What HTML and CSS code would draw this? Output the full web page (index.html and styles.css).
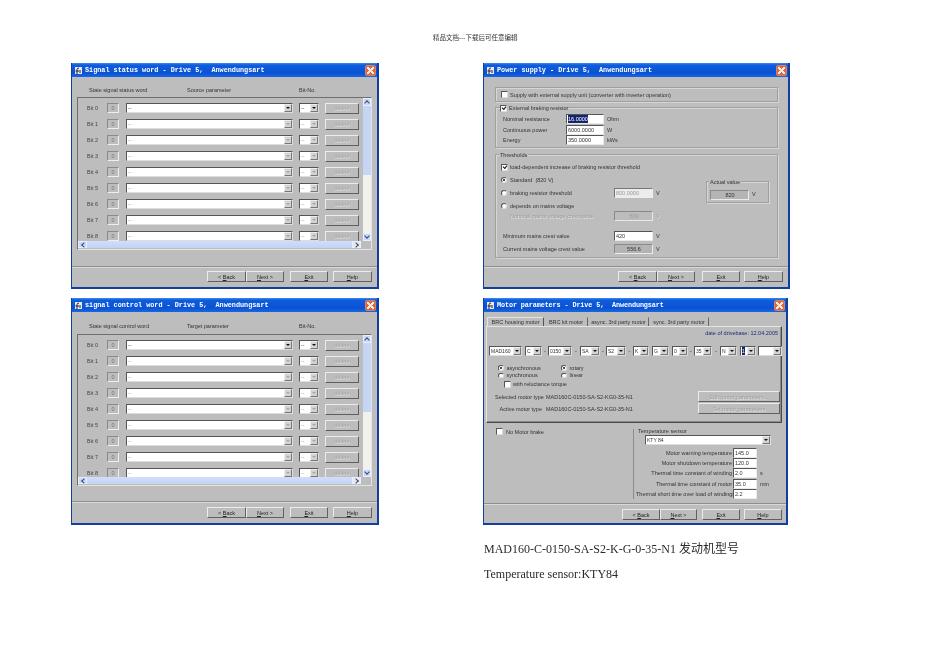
FILE: index.html
```html
<!DOCTYPE html>
<html lang="zh">
<head>
<meta charset="utf-8">
<title>Drive 5 dialogs</title>
<link rel="stylesheet" href="styles.css">
</head>
<body>
<header class="doc-head">精品文档---下载后可任意编辑</header>
<main class="sheet">

<section class="win">
  <div class="title"><svg class="ico" viewBox="0 0 9 9"><rect x="1" y="1" width="7" height="7" fill="#e8e8f0"/><path d="M3 8V3.5Q3 2 5 2M1.5 5H5M6 4v3" stroke="#223" fill="none"/></svg><span class="ttext">Signal status word - Drive 5,  Anwendungsart</span><span class="close"></span></div>
  <div class="heads"><span class="h1">State signal status word</span><span class="h2">Source parameter</span><span>Bit-No.</span></div>
  <div class="panel">
    <div class="view">
      <div class="bit on"><span class="bl">Bit 0</span><span class="num">0</span><span class="combo wide">--<i class="arr"></i></span><span class="combo small">--<i class="arr"></i></span><span class="btn del">delete</span></div>
      <div class="bit"><span class="bl">Bit 1</span><span class="num">0</span><span class="combo wide">--<i class="arr"></i></span><span class="combo small">--<i class="arr"></i></span><span class="btn del">delete</span></div>
      <div class="bit"><span class="bl">Bit 2</span><span class="num">0</span><span class="combo wide">--<i class="arr"></i></span><span class="combo small">--<i class="arr"></i></span><span class="btn del">delete</span></div>
      <div class="bit"><span class="bl">Bit 3</span><span class="num">0</span><span class="combo wide">--<i class="arr"></i></span><span class="combo small">--<i class="arr"></i></span><span class="btn del">delete</span></div>
      <div class="bit"><span class="bl">Bit 4</span><span class="num">0</span><span class="combo wide">--<i class="arr"></i></span><span class="combo small">--<i class="arr"></i></span><span class="btn del">delete</span></div>
      <div class="bit"><span class="bl">Bit 5</span><span class="num">0</span><span class="combo wide">--<i class="arr"></i></span><span class="combo small">--<i class="arr"></i></span><span class="btn del">delete</span></div>
      <div class="bit"><span class="bl">Bit 6</span><span class="num">0</span><span class="combo wide">--<i class="arr"></i></span><span class="combo small">--<i class="arr"></i></span><span class="btn del">delete</span></div>
      <div class="bit"><span class="bl">Bit 7</span><span class="num">0</span><span class="combo wide">--<i class="arr"></i></span><span class="combo small">--<i class="arr"></i></span><span class="btn del">delete</span></div>
      <div class="bit"><span class="bl">Bit 8</span><span class="num">0</span><span class="combo wide">--<i class="arr"></i></span><span class="combo small">--<i class="arr"></i></span><span class="btn del">delete</span></div>
    </div>
    <div class="vbar"><span class="sb up"></span><span class="thumb"></span><span class="track"></span><span class="sb down"></span></div>
    <div class="hbar"><span class="sb left"></span><span class="hthumb"></span><span class="sb right"></span></div>
  </div>
  <div class="foot"><span class="btn nav b39"><span>&lt; <u>B</u>ack</span></span><span class="btn nav"><span><u>N</u>ext &gt;</span></span><span class="btn nav gapl"><span><u>E</u>xit</span></span><span class="btn nav b39 gapm"><span><u>H</u>elp</span></span></div>
</section>

<section class="win">
  <div class="title"><svg class="ico" viewBox="0 0 9 9"><rect x="1" y="1" width="7" height="7" fill="#e8e8f0"/><path d="M3 8V3.5Q3 2 5 2M1.5 5H5M6 4v3" stroke="#223" fill="none"/></svg><span class="ttext">Power supply - Drive 5,  Anwendungsart</span><span class="close"></span></div>
  <div class="power">
    <div class="group g-ext"><span class="chk"></span><span>Supply with external supply unit (converter with inverter operation)</span></div>
    <div class="group g-res">
      <div class="legend"><span class="chk on"></span><span>External braking resistor</span></div>
      <div class="prow"><span class="plabel">Nominal resistance</span><span class="edit e38"><b class="sel">16.0000</b></span><span class="unit">Ohm</span></div>
      <div class="prow"><span class="plabel">Continuous power</span><span class="edit e38">6000.0000</span><span class="unit">W</span></div>
      <div class="prow"><span class="plabel">Energy</span><span class="edit e38">350.0000</span><span class="unit">kWs</span></div>
    </div>
    <div class="group g-thr">
      <div class="legend plain">Thresholds</div>
      <div class="thr">
        <div class="thr-left">
          <div class="trow first"><span class="chk on"></span><span class="ctext">load-dependent increase of braking resistor threshold</span></div>
          <div class="trow"><span class="radio on"></span><span class="rtext">Standard&nbsp; (820 V)</span></div>
          <div class="trow"><span class="radio"></span><span class="rtext rt-w">braking resistor threshold</span><span class="edit e39 off-white">800.0000</span><span class="unit">V</span></div>
          <div class="trow"><span class="radio"></span><span class="rtext">depends on mains voltage</span></div>
          <div class="trow tight"><span class="dis rt-n">Nominal mains voltage crest value</span><span class="edit e39 dis-c">509</span><span class="unit dis">V</span></div>
          <div class="trow far"><span class="tl">Minimum mains crest value</span><span class="edit e39">420</span><span class="unit">V</span></div>
          <div class="trow"><span class="tl">Current mains voltage crest value</span><span class="edit e39 ro ctr">556.6</span><span class="unit">V</span></div>
        </div>
        <div class="actual">
          <div class="legend plain">Actual value</div>
          <div class="arow"><span class="edit e39 ro ctr">820</span><span class="unit uv">V</span></div>
        </div>
      </div>
    </div>
  </div>
  <div class="foot power-foot"><span class="btn nav b39"><span>&lt; <u>B</u>ack</span></span><span class="btn nav"><span><u>N</u>ext &gt;</span></span><span class="btn nav gapl"><span><u>E</u>xit</span></span><span class="btn nav b39 gapm"><span><u>H</u>elp</span></span></div>
</section>

<section class="win lower">
  <div class="title"><svg class="ico" viewBox="0 0 9 9"><rect x="1" y="1" width="7" height="7" fill="#e8e8f0"/><path d="M3 8V3.5Q3 2 5 2M1.5 5H5M6 4v3" stroke="#223" fill="none"/></svg><span class="ttext">signal control word - Drive 5,  Anwendungsart</span><span class="close"></span></div>
  <div class="heads"><span class="h1">State signal control word</span><span class="h2">Target parameter</span><span>Bit-No.</span></div>
  <div class="panel">
    <div class="view">
      <div class="bit on"><span class="bl">Bit 0</span><span class="num">0</span><span class="combo wide">--<i class="arr"></i></span><span class="combo small">--<i class="arr"></i></span><span class="btn del">delete</span></div>
      <div class="bit"><span class="bl">Bit 1</span><span class="num">0</span><span class="combo wide">--<i class="arr"></i></span><span class="combo small">--<i class="arr"></i></span><span class="btn del">delete</span></div>
      <div class="bit"><span class="bl">Bit 2</span><span class="num">0</span><span class="combo wide">--<i class="arr"></i></span><span class="combo small">--<i class="arr"></i></span><span class="btn del">delete</span></div>
      <div class="bit"><span class="bl">Bit 3</span><span class="num">0</span><span class="combo wide">--<i class="arr"></i></span><span class="combo small">--<i class="arr"></i></span><span class="btn del">delete</span></div>
      <div class="bit"><span class="bl">Bit 4</span><span class="num">0</span><span class="combo wide">--<i class="arr"></i></span><span class="combo small">--<i class="arr"></i></span><span class="btn del">delete</span></div>
      <div class="bit"><span class="bl">Bit 5</span><span class="num">0</span><span class="combo wide">--<i class="arr"></i></span><span class="combo small">--<i class="arr"></i></span><span class="btn del">delete</span></div>
      <div class="bit"><span class="bl">Bit 6</span><span class="num">0</span><span class="combo wide">--<i class="arr"></i></span><span class="combo small">--<i class="arr"></i></span><span class="btn del">delete</span></div>
      <div class="bit"><span class="bl">Bit 7</span><span class="num">0</span><span class="combo wide">--<i class="arr"></i></span><span class="combo small">--<i class="arr"></i></span><span class="btn del">delete</span></div>
      <div class="bit"><span class="bl">Bit 8</span><span class="num">0</span><span class="combo wide">--<i class="arr"></i></span><span class="combo small">--<i class="arr"></i></span><span class="btn del">delete</span></div>
    </div>
    <div class="vbar"><span class="sb up"></span><span class="thumb"></span><span class="track"></span><span class="sb down"></span></div>
    <div class="hbar"><span class="sb left"></span><span class="hthumb"></span><span class="sb right"></span></div>
  </div>
  <div class="foot"><span class="btn nav b39"><span>&lt; <u>B</u>ack</span></span><span class="btn nav"><span><u>N</u>ext &gt;</span></span><span class="btn nav gapl"><span><u>E</u>xit</span></span><span class="btn nav b39 gapm"><span><u>H</u>elp</span></span></div>
</section>

<section class="win lower motor">
  <div class="title"><svg class="ico" viewBox="0 0 9 9"><rect x="1" y="1" width="7" height="7" fill="#e8e8f0"/><path d="M3 8V3.5Q3 2 5 2M1.5 5H5M6 4v3" stroke="#223" fill="none"/></svg><span class="ttext">Motor parameters - Drive 5,  Anwendungsart</span><span class="close"></span></div>
  <div class="tabs"><span class="tab t1 act">BRC housing motor</span><span class="tab t2">BRC kit motor</span><span class="tab t3">async. 3rd party motor</span><span class="tab t4">sync. 3rd party motor</span></div>
  <div class="tabpanel">
    <div class="date">date of drivebase: 12.04.2005</div>
    <div class="typecode">
      <span class="combo c33">MAD160<i class="arr"></i></span><span class="combo c17 m3">C<i class="arr"></i></span><span class="dash d6">-</span><span class="combo c24">0150<i class="arr"></i></span><span class="dash d8">-</span><span class="combo c20">SA<i class="arr"></i></span><span class="dash d6">-</span><span class="combo c20">S2<i class="arr"></i></span><span class="dash d7">-</span><span class="combo c16">K<i class="arr"></i></span><span class="combo c17 m3">G<i class="arr"></i></span><span class="combo c16 m3">0<i class="arr"></i></span><span class="dash d6">-</span><span class="combo c18">35<i class="arr"></i></span><span class="dash d8">-</span><span class="combo c17">N<i class="arr"></i></span><span class="combo c16 m3"><b class="sel">1</b><i class="arr"></i></span><span class="combo c24 m2"><i class="arr"></i></span>
    </div>
    <div class="rrow"><span class="rcell"><span class="radio on"></span><span class="rtext">asynchronous</span></span><span class="rcell"><span class="radio on"></span><span class="rtext">rotary</span></span></div>
    <div class="rrow"><span class="rcell"><span class="radio"></span><span class="rtext">synchronous</span></span><span class="rcell"><span class="radio"></span><span class="rtext">linear</span></span></div>
    <div class="relu"><span class="chk"></span><span>with reluctance torque</span></div>
    <div class="mtype first"><span class="mlabel">Selected motor type</span><span class="mval">MAD160C-0150-SA-S2-KG0-35-N1</span><span class="btn wide-btn">Edit motor parameters...</span></div>
    <div class="mtype"><span class="mlabel">Active motor type</span><span class="mval">MAD160C-0150-SA-S2-KG0-35-N1</span><span class="btn wide-btn">Set motor parameters</span></div>
  </div>
  <div class="lowerpart">
    <div class="brake"><span class="chk"></span><span>No Motor brake</span></div>
    <div class="sensor">
      <div class="slabel">Temperature sensor</div>
      <span class="combo kty">KTY 84<i class="arr"></i></span>
      <div class="srow firsts"><span class="sl">Motor warning temperature</span><span class="edit e24">145.0</span></div>
      <div class="srow"><span class="sl">Motor shutdown temperature</span><span class="edit e24">120.0</span></div>
      <div class="srow"><span class="sl">Thermal time constant of winding</span><span class="edit e24">2.0</span><span class="unit">s</span></div>
      <div class="srow"><span class="sl">Thermal time constant of motor</span><span class="edit e24">35.0</span><span class="unit">min</span></div>
      <div class="srow"><span class="sl">Thermal short time over load of windings</span><span class="edit e24">2.2</span></div>
    </div>
  </div>
  <div class="foot motor-foot"><span class="btn nav"><span>&lt; <u>B</u>ack</span></span><span class="btn nav n37"><span><u>N</u>ext &gt;</span></span><span class="btn nav gapl"><span><u>E</u>xit</span></span><span class="btn nav gapm"><span><u>H</u>elp</span></span></div>
</section>

<div class="caption">
  <p>MAD160-C-0150-SA-S2-K-G-0-35-N1 发动机型号</p>
  <p>Temperature sensor:KTY84</p>
</div>
</main>
</body>
</html>
```

FILE: styles.css
```css
* { box-sizing: border-box; }
html, body { margin: 0; padding: 0; background: #fff; }
body { width: 950px; height: 672px; overflow: hidden; font-family: "Liberation Sans", "Noto Sans CJK SC", sans-serif; }

.doc-head {
  height: 63px; padding-top: 34px; padding-left: 433px; filter: blur(.3px);
  font: 6.5px/8px "Liberation Serif", "Noto Sans CJK SC", serif; color: #333;
}
.sheet {
  display: grid; grid-template-columns: 308px 307px; grid-template-rows: 226px 227px;
  column-gap: 104px; row-gap: 9px; padding-left: 71px; align-items: start;
}

.win {
  height: 226px; display: flex; flex-direction: column; background: #bdbdbd;
  border: 1px solid #123f9f; border-width: 0 2px 2px 1px;
  font-size: 5.5px; line-height: 8px; color: #333; filter: blur(.45px);
}
.lower { height: 227px; }
.motor { width: 305px; }

.title {
  height: 14px; flex: none; display: flex; align-items: center; padding: 0 1px 0 2px; color: #fff;
  background: linear-gradient(#3f8df0 0, #0e5ddc 2px, #0a52d4 10px, #1a66e0 14px);
}
.ico { width: 9px; height: 9px; flex: none; margin-right: 2px; }
.ttext { font: bold 6.8px/10px "Liberation Mono", monospace; white-space: pre; flex: 1; }
.motor .ttext { letter-spacing: -.11px; }
.close {
  width: 11px; height: 11px; flex: none; border-radius: 2px; border: 1px solid #c9866c;
  background-color: #e2663a; background-repeat: no-repeat; background-position: center; background-size: 7px 7px;
  background-image:
    linear-gradient(45deg, transparent 40%, #fbe9e2 40% 60%, transparent 60%),
    linear-gradient(-45deg, transparent 40%, #fbe9e2 40% 60%, transparent 60%);
}

.heads { height: 20px; flex: none; padding: 9px 0 0 17px; display: flex; }
.lower .heads { height: 22px; padding-top: 10px; }
.h1 { width: 98px; }
.h2 { width: 112px; }

.panel {
  margin-left: 5px; width: 295px; height: 153px; flex: none;
  border: 1px solid #6f6f6f; border-right-color: #e4e4e4; border-bottom-color: #e4e4e4;
  display: grid; grid-template-columns: 285px 8px; grid-template-rows: 143px 8px;
}
.lower .panel { height: 152px; grid-template-rows: 142px 8px; }
.view { overflow: hidden; padding: 2px 0 0 9px; }
.bit { height: 16px; display: flex; align-items: center; color: #444; white-space: nowrap; }
.bl { width: 20px; }
.num {
  width: 12px; height: 10px; margin-right: 7px; text-align: center; color: #777;
  border: 1px solid; border-color: #8a8a8a #eee #eee #8a8a8a; line-height: 8px;
}
.combo {
  display: flex; align-items: center; height: 10px; background: #fff; padding-left: 1px; color: #999;
  border: 1px solid; border-color: #555 #ddd #ddd #555; position: relative; font-size: 5px; flex: none;
}
.arr {
  margin-left: auto; width: 8px; height: 8px; background: #d6d3cc; flex: none; position: relative;
  border: 1px solid; border-color: #eee #777 #777 #eee;
}
.arr::after {
  content: ""; display: block; margin: 2px 0 0 1px; width: 0; height: 0;
  border: 2px solid transparent; border-top: 2px solid #aaa; border-bottom: 0;
}
.on .arr::after, .typecode .arr::after, .kty .arr::after { border-top-color: #111; }
.on .combo, .typecode .combo, .kty { color: #333; }
.wide { width: 167px; margin-right: 6px; }
.small { width: 20px; margin-right: 6px; }

.btn {
  display: flex; align-items: center; justify-content: center; height: 11px; flex: none;
  background: #bdbdbd; border: 1px solid; border-color: #ececec #606060 #606060 #ececec;
  color: #2c2c2c; white-space: nowrap;
}
.del { width: 34px; color: #a2a2a2; text-shadow: .5px .5px 0 #e4e4e4; }

.vbar { display: flex; flex-direction: column; background: #f2f2ec; }
.sb { display: block; flex: none; background: #c9d8f7; border: 1px solid #e8eefc; }
.sb.up, .sb.down { height: 8px; position: relative; }
.sb.up::after, .sb.down::after, .sb.left::after, .sb.right::after {
  content: ""; display: block; width: 3px; height: 3px; margin: 1px auto 0;
  border: solid #33478f; border-width: 1px 0 0 1px;
}
.sb.up::after { transform: rotate(45deg); margin-top: 2px; }
.sb.down::after { transform: rotate(225deg); margin-top: 0; }
.thumb { height: 69px; flex: none; background: #c5d5f6; }
.track { flex: 1; }
.hbar { grid-column: 1 / 3; display: flex; height: 7px; padding-right: 10px; }
.sb.left, .sb.right { width: 9px; }
.sb.left::after { transform: rotate(-45deg); margin-left: 3px; }
.sb.right { background: #e8e8e4; }
.sb.right::after { transform: rotate(135deg); margin-left: 1px; }
.hthumb { flex: 1; background: linear-gradient(#d2def9, #c2d2f5); }

.foot {
  margin-top: auto; height: 21px; flex: none; border-top: 1px solid #8f8f8f; box-shadow: inset 0 1px 0 #d8d8d8;
  display: flex; justify-content: flex-end; padding: 4px 5px 0 0;
}
.lower .foot { height: 22px; padding-top: 5px; }
.lower.motor .foot { height: 20px; padding-right: 4px; }
.nav { width: 38px; color: #222; }
.b39 { width: 39px; }
.n37 { width: 37px; }
.gapl { margin-left: 6px; }
.gapm { margin-left: 5px; }
.power-foot .gapl { margin-left: 7px; }
.power-foot .gapm { margin-left: 4px; }
.motor-foot .gapl { margin-left: 5px; }
.motor-foot .gapm { margin-left: 4px; }

.group {
  border: 1px solid #a0a0a0; box-shadow: 1px 1px 0 #d6d6d6, inset 1px 1px 0 #d6d6d6; width: 283px; margin-left: 11px; flex: none;
}
.power { padding-top: 10px; }
.g-ext { height: 15px; display: flex; align-items: center; padding-left: 5px; }
.g-ext .chk { margin-right: 2px; }
.g-res { height: 41px; margin-top: 5px; padding-left: 7px; }
.legend { display: flex; align-items: center; width: fit-content; height: 8px; margin-top: -4px; background: #bdbdbd; }
.g-res .legend { margin-left: -3px; }
.g-res .legend .chk { margin-right: 2px; }
.plain { padding: 0 1px; }
.g-thr .legend.plain { margin-left: 3px; }
.prow { display: flex; align-items: center; height: 10.4px; }
.prow:nth-child(2) { margin-top: 2px; }
.plabel { width: 63px; }
.edit {
  display: block; height: 10px; background: #fff; padding-left: 1px; line-height: 8px; flex: none; white-space: nowrap;
  border: 1px solid; border-color: #555 #eaeaea #eaeaea #555; color: #333;
}
.e38 { width: 38px; }
.e39 { width: 39px; }
.e24 { width: 24px; }
.unit { margin-left: 3px; }
.sel { background: #14246e; color: #fff; font-weight: normal; display: inline-block; }
.off-white { background: #ececec; color: #999; border-color: #777 #eee #eee #777; }
.ro { background: #b4b4b4; border-color: #8a8a8a #eaeaea #eaeaea #8a8a8a; }
.ctr { text-align: center; }
.dis { color: #9c9c9c; text-shadow: .5px .5px 0 #e2e2e2; }
.dis-c { text-align: center; color: #9c9c9c; background: #bcbcbc; border-color: #8a8a8a #e6e6e6 #e6e6e6 #8a8a8a; }

.g-thr { height: 104px; margin-top: 6px; }
.thr { display: flex; }
.thr-left { width: 210px; padding-left: 5px; }
.trow { display: flex; align-items: center; height: 10px; margin-top: 3px; white-space: nowrap; }
.tight { margin-top: 0; }
.far { margin-top: 10px; }
.ctext { margin-left: 2px; }
.rtext { margin-left: 3px; }
.rt-w { width: 104px; }
.rt-n { width: 104px; margin-left: 9px; }
.tl { width: 111px; margin-left: 2px; }
.actual {
  margin-top: 22px; width: 63px; height: 22px; border: 1px solid #a0a0a0; box-shadow: 1px 1px 0 #d6d6d6, inset 1px 1px 0 #d6d6d6;
}
.arow { display: flex; padding: 4px 0 0 3px; }
.actual .legend.plain { margin-left: 2px; }

.chk {
  display: block; width: 7px; height: 7px; background: #fff; flex: none; position: relative;
  border: 1px solid; border-color: #555 #ddd #ddd #555;
}
.chk.on::after {
  content: ""; display: block; width: 3px; height: 2px; margin: .5px 0 0 .5px;
  border: solid #111; border-width: 0 0 1px 1px; transform: rotate(-50deg);
}
.radio {
  display: block; width: 6px; height: 6px; border-radius: 50%; background: #fff; flex: none;
  border: 1px solid; border-color: #555 #ddd #ddd #555;
}
.radio.on::after { content: ""; display: block; width: 2px; height: 2px; margin: 1px; border-radius: 50%; background: #111; }

.tabs { display: flex; padding: 5px 0 0 3px; height: 14px; flex: none; }
.tab { height: 9px; line-height: 8px; text-align: center; border: 1px solid; border-color: transparent #666 transparent transparent; border-bottom: 0; white-space: nowrap; }
.act { border-color: #e4e4e4 #555 transparent #e4e4e4; }
.t1 { width: 57px; }
.t2 { width: 44px; }
.t3 { width: 61px; }
.t4 { width: 60px; }
.tabpanel {
  margin-left: 2px; width: 296px; height: 97px; flex: none; padding-top: 1px;
  border: 1px solid; border-color: #e4e4e4 #4a4a4a #4a4a4a #e4e4e4;
  box-shadow: inset -1px -1px 0 #8a8a8a;
}
.date { height: 10px; line-height: 10px; text-align: right; padding-right: 3px; color: #1d2a78; }
.typecode { display: flex; height: 10px; margin-top: 8px; padding-left: 2px; }
.dash { text-align: center; flex: none; line-height: 10px; }
.d6 { width: 6px; } .d7 { width: 7px; } .d8 { width: 8px; }
.m3 { margin-left: 3px; } .m2 { margin-left: 2px; }
.c33 { width: 33px; } .c17 { width: 17px; } .c24 { width: 24px; } .c20 { width: 20px; } .c16 { width: 16px; } .c18 { width: 18px; }
.rrow { display: flex; height: 7.5px; padding-left: 11px; }
.rrow:nth-of-type(3) { margin-top: 8px; }
.rcell { display: flex; align-items: center; width: 63px; }
.rcell .radio { width: 5.5px; height: 5.5px; }
.rtext { white-space: nowrap; }
.relu { display: flex; align-items: center; height: 8px; padding-left: 17px; margin-top: 1px; }
.relu .chk { margin-right: 2px; }
.mtype { display: flex; align-items: center; height: 11px; padding-left: 8px; margin-top: 1px; }
.mtype.first { margin-top: 3px; }
.mlabel { width: 47px; text-align: right; margin-right: 4px; white-space: nowrap; }
.mval { white-space: nowrap; }
.wide-btn { width: 82px; margin-left: auto; margin-right: 1px; color: #a0a0a0; text-shadow: .5px .5px 0 #e2e2e2; }

.lowerpart { display: flex; flex: none; height: 78px; padding-top: 6px; }
.brake { display: flex; align-items: center; height: 7px; width: 149px; padding-left: 12px; margin-top: -1px; }
.brake .chk { margin-right: 3px; }
.sensor { width: 150px; border-left: 1px solid #8c8c8c; height: 70px; padding-left: 4px; }
.slabel { height: 6px; line-height: 4px; }
.kty { width: 126px; margin: 0 0 0 7px; }
.srow { display: flex; height: 10.2px; align-items: center; justify-content: flex-start; margin-left: -2px; }
.firsts { margin-top: 3px; }
.sl { width: 96px; text-align: right; margin-right: 1px; white-space: nowrap; }

.caption { grid-column: 2; margin-top: 3px; font: 12px/25px "Liberation Serif", "Noto Sans CJK SC", serif; color: #2a2a2a; white-space: nowrap; filter: blur(.2px); }
.caption p { margin: 0 0 0 1px; }
```
